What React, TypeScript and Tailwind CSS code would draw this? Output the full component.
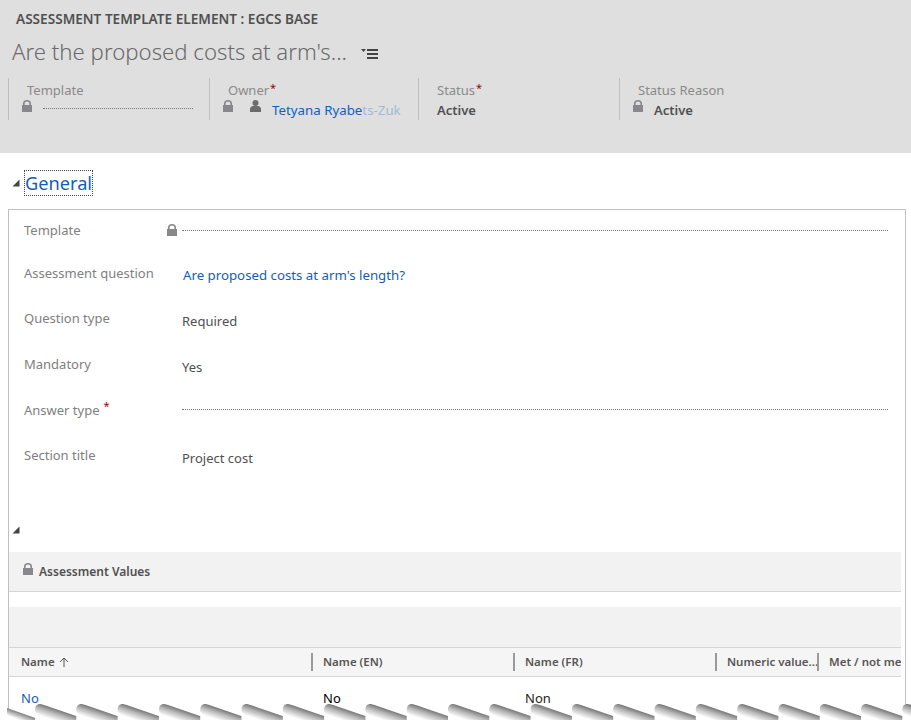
import React from "react";

const FONT = "font-['Noto_Sans','Open_Sans',sans-serif]";

const Lock = ({ className = "" }: { className?: string }) => (
  <svg className={className} width="10" height="12" viewBox="0 0 10 12">
    <path d="M0 5h1V3.500a4 3.500 0 0 1 8 0V5h1v7H0z M2.600 5h4.800V3.600a2.400 2.200 0 0 0-4.800 0z" fill="#88888c" fillRule="evenodd" />
  </svg>
);

const Star = () => <span className="text-[#a00000] text-[11px] leading-none">*</span>;

const Triangle = () => (
  <svg width="8" height="8" viewBox="0 0 8 8">
    <path d="M7.500 .5v7H.5z" fill="#444" />
  </svg>
);

const HeaderField = ({ label, star, width, children }: { label: string; star?: boolean; width: string; children: React.ReactNode }) => (
  <div className={`${width} h-[42px] border-l border-[#bcc0c4] flex flex-col`}>
    <div className="h-[20px] mt-[2px] pl-[18px] text-[13px] leading-[20px] text-[#8a8a8a] flex items-start whitespace-nowrap">
      {label}
      {star && <span className="-mt-[3px] ml-px"><Star /></span>}
    </div>
    <div className="h-[20px] mt-px flex items-center">{children}</div>
  </div>
);

const FormRow = ({ label, star, height, children }: { label: string; star?: boolean; height: string; children?: React.ReactNode }) => (
  <div className={`flex ${height} pl-[15px] pr-[17px]`}>
    <div className="w-[158px] shrink-0 text-[13px] leading-[18px] text-[#808080] whitespace-nowrap">
      {label}
      {star && <span className="ml-1 relative -top-[5px]"><Star /></span>}
    </div>
    <div className="flex-1 min-w-0">{children}</div>
  </div>
);

const Col = ({ label, width, sep = true, arrow }: { label: string; width: string; sep?: boolean; arrow?: boolean }) => (
  <div className={`${width} shrink-0 flex items-center h-[18px]`}>
    <span className="flex-1 flex items-center gap-[4px] text-[11.500px] font-semibold text-[#555] whitespace-nowrap overflow-hidden">
      {label}
      {arrow && (
        <svg width="10" height="10" viewBox="0 0 10 10" fill="none" stroke="#555" strokeWidth="1">
          <path d="M5 10V1M1 5l4-4 4 4" />
        </svg>
      )}
    </span>
    {sep && <span className="w-[2px] h-[18px] bg-[#9a9a9a] shrink-0" />}
  </div>
);

const TornEdge = () => (
  <svg className="absolute left-0 bottom-0" width="911" height="17" viewBox="0 0 911 17">
    <defs>
      <linearGradient id="tooth" gradientUnits="userSpaceOnUse" x1="5" y1="1" x2="1.500" y2="11.500">
        <stop offset="0" stopColor="#7a7a7a" />
        <stop offset="0.4" stopColor="#b8b8b8" />
        <stop offset="1" stopColor="#ffffff" />
      </linearGradient>
      <linearGradient id="edge" gradientUnits="userSpaceOnUse" x1="8" y1="5" x2="5.500" y2="12">
        <stop offset="0" stopColor="#7c7c7c" />
        <stop offset="1" stopColor="#ffffff" />
      </linearGradient>
    </defs>
    <path d="M7 5L41 17H7z" fill="url(#edge)" />
    {Array.from({ length: 22 }).map((_, i) => (
      <g key={i} transform={`translate(${35 + i * 41.3} 0)`}>
        <path d="M0 17V7C0 3 2 1 5 1C7 1 9 2 12 3L44 15V17z" fill="#fff" />
        <path d="M0 7C0 3 2 1 5 1C7 1 9 2 12 3L44 14L44 17H11C6 13 0 11 0 7z" fill="url(#tooth)" />
      </g>
    ))}
  </svg>
);

export default function App() {
  return (
    <div className={`${FONT} relative w-[911px] h-[720px] overflow-hidden bg-white`}>
      {/* Header */}
      <div className="h-[153px] bg-[#dfdfdf]">
        <div className="pl-4 pt-[10px] h-[37px] text-[13.600px] leading-[18px] font-semibold text-[#505050] whitespace-nowrap">
          ASSESSMENT TEMPLATE ELEMENT : EGCS BASE
        </div>
        <div className="pl-3 h-[30px] flex items-center">
          <span className="text-[22.200px] leading-[30px] font-light text-[#6a6a6a] whitespace-nowrap">Are the proposed costs at arm's...</span>
          <svg className="ml-[14px] mt-[3px]" width="18" height="12" viewBox="0 0 18 12">
            <path d="M0 1h5L2.500 4z" fill="#444" />
            <path d="M6 1h11v2H6zM6 5h11v2H6zM6 9h11v2H6z" fill="#444" />
          </svg>
        </div>
        <div className="flex pl-2 mt-[11px]">
          <HeaderField label="Template" width="w-[201px]">
            <Lock className="ml-[13px] -mt-[9px]" />
            <div className="ml-[11px] w-[150px] border-b border-dotted border-[#777] -mt-[4px]" />
          </HeaderField>
          <HeaderField label="Owner" star width="w-[209px]">
            <Lock className="ml-[13px] -mt-[9px]" />
            <svg className="ml-[17px] -mt-[9px]" width="11" height="12" viewBox="0 0 11 12">
              <circle cx="5.500" cy="3" r="3" fill="#6c6c6c" />
              <path d="M0 12V9c0-2 2-3 3-3h5c1 0 3 1 3 3v3z" fill="#6c6c6c" />
            </svg>
            <span className="ml-[11px] text-[13.300px] text-[#1160b7] whitespace-nowrap">
              Tetyana Ryabe<span className="text-[#9dbcd8]">ts-Zuk</span>
            </span>
          </HeaderField>
          <HeaderField label="Status" star width="w-[201px]">
            <span className="pl-[18px] text-[13px] font-semibold text-[#505050]">Active</span>
          </HeaderField>
          <HeaderField label="Status Reason" width="w-[200px]">
            <Lock className="ml-[13px] -mt-[9px]" />
            <span className="ml-[11px] text-[13px] font-semibold text-[#505050]">Active</span>
          </HeaderField>
        </div>
      </div>

      {/* Section title */}
      <div className="h-[56px] flex items-center pl-3 pt-[4px]">
        <Triangle />
        <span className="ml-[4px] h-[26px] border border-dotted border-[#444] text-[18.200px] leading-[24px] text-[#1160b7]">General</span>
      </div>

      {/* Form box */}
      <div className="ml-2 mr-[5px] border border-[#c0c0c0] h-[520px]">
        <div className="pt-[11px]">
          <FormRow label="Template" height="h-[43px]">
            <div className="flex items-center -ml-[15px] mt-px h-[16px]">
              <Lock className="-mt-px" />
              <div className="ml-[5px] flex-1 border-b border-dotted border-[#777]" />
            </div>
          </FormRow>
          <FormRow label="Assessment question" height="h-[45px]">
            <div className="text-[13.250px] leading-[18px] text-[#1160b7] pt-[2px] pl-px">Are proposed costs at arm's length?</div>
          </FormRow>
          <FormRow label="Question type" height="h-[46px]">
            <div className="text-[13px] leading-[18px] text-[#505050] pt-[3px]">Required</div>
          </FormRow>
          <FormRow label="Mandatory" height="h-[46px]">
            <div className="text-[13px] leading-[18px] text-[#505050] pt-[3px]">Yes</div>
          </FormRow>
          <FormRow label="Answer type" star height="h-[45px]">
            <div className="border-b border-dotted border-[#777] h-[9px]" />
          </FormRow>
          <FormRow label="Section title" height="h-[73px]">
            <div className="text-[13px] leading-[18px] text-[#505050] pt-[3px]">Project cost</div>
          </FormRow>
        </div>
        <div className="h-[32px] pl-[3px] pt-[6px] mt-[1px]">
          <Triangle />
        </div>
        <div className="mr-[4px]">
          <div className="h-[40px] bg-[#f2f2f2] border-b border-[#d6d6d6] flex items-center pl-[14px]">
            <Lock className="-mt-[6px]" />
            <span className="ml-[6px] pt-px text-[12px] font-semibold text-[#505050]">Assessment Values</span>
          </div>
          <div className="h-[15px]" />
          <div className="h-[41px] bg-[#f2f2f2] border-b border-[#d6d6d6]" />
          <div className="h-[29px] bg-[#f5f5f5] border-b border-[#d6d6d6] flex items-center pl-[12px] overflow-hidden">
            <Col label="Name" arrow width="w-[292px]" />
            <Col label="Name (EN)" width="w-[202px] pl-[10px]" />
            <Col label="Name (FR)" width="w-[202px] pl-[10px]" />
            <Col label="Numeric value..." width="w-[102px] pl-[10px]" />
            <Col label="Met / not me" sep={false} width="w-[83px] pl-[10px]" />
          </div>
          <div className="flex pl-[12px] pt-[12px] text-[13px] leading-[18px]">
            <div className="w-[302px] text-[#1160b7]">No</div>
            <div className="w-[202px] text-black">No</div>
            <div className="text-[#222]">Non</div>
          </div>
        </div>
      </div>
      <TornEdge />
    </div>
  );
}
